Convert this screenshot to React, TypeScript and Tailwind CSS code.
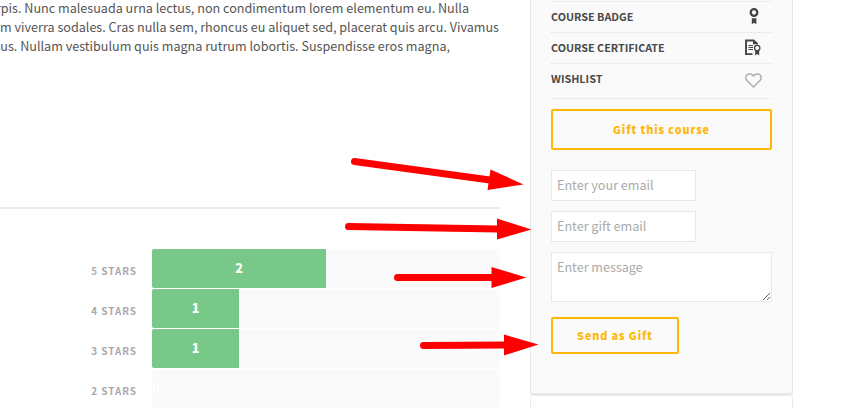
import React from "react";

const paragraph = [
  { text: "rpis. Nunc malesuada urna lectus, non condimentum lorem elementum eu. Nulla", width: "w-[469px]" },
  { text: "am viverra sodales. Cras nulla sem, rhoncus eu aliquet sed, placerat quis arcu. Vivamus", width: "w-[499px]" },
  { text: "sus. Nullam vestibulum quis magna rutrum lobortis. Suspendisse eros magna,", width: "w-[450px]" },
];

const ratings = [
  { stars: 5, count: 2, width: 174 },
  { stars: 4, count: 1, width: 87 },
  { stars: 3, count: 1, width: 87 },
  { stars: 2, count: 0, width: 0 },
];

function BadgeIcon() {
  return (
    <svg className="mb-0.5 mr-px" width="14" height="18" viewBox="0 0 14 18">
      <circle cx="7" cy="5.500" r="3.300" fill="none" stroke="#444" strokeWidth="2.300" />
      <path d="M4.800 11.300h4.600v6L7.100 15.700 4.800 17.300z" fill="#444" />
    </svg>
  );
}

function CertificateIcon() {
  return (
    <svg className="mb-0.5 mr-px" width="17" height="17" viewBox="0 0 17 17" fill="none">
      <path d="M8.500 15.100H2V1.500H9.500L13.500 5" stroke="#444" strokeWidth="1.900" />
      <path d="M9 .6v4.600h5z" fill="#444" />
      <path d="M4.500 6.500H9M4.500 8.500H9M4.500 10.500H9" stroke="#444" strokeWidth="1" />
      <circle cx="13.200" cy="9" r="2.700" fill="#fafafa" stroke="#444" strokeWidth="1.300" />
      <path d="M11.200 11.500h4V16.500l-2-1.600-2 1.600z" fill="#444" />
    </svg>
  );
}

function HeartIcon() {
  return (
    <svg className="mt-0.5" width="17" height="15" viewBox="0 0 17 15" fill="none" stroke="#aaa" strokeWidth="1.4" strokeLinejoin="round">
      <path d="M8.5 13.9L2 7.5C-.2 5 .9 1 4.5.9c1.900 0 3.100.8 4 2.100.9-1.300 2.100-2.100 4-2.100 3.600.1 4.700 4.100 2.500 6.600z" />
    </svg>
  );
}

function Arrows() {
  return (
    <svg className="pointer-events-none absolute left-0 top-0" width="846" height="409" stroke="#f00" strokeWidth="7" strokeLinecap="round" fill="#f00">
      <path d="M354.500 161.500L490 180" />
      <path d="M490.500 169.500L523.500 184.500L487.500 190z" stroke="none" />
      <path d="M348.500 226.500L498 229" />
      <path d="M497 218.500L531.500 229.500L497 239.500z" stroke="none" />
      <path d="M397.500 277.500H494" />
      <path d="M491.500 267L526.500 277.500L491.500 288z" stroke="none" />
      <path d="M423.500 345.500L505 345" />
      <path d="M504 334.500L538.500 344.500L504 355.500z" stroke="none" />
    </svg>
  );
}

export default function App() {
  return (
    <div className="relative flex h-[409px] w-[846px] overflow-hidden bg-white font-['Noto_Sans_CJK_SC',sans-serif]">
      <main className="w-[500px] shrink-0 overflow-hidden">
        <div className="-mt-0.5 h-[209px] text-[12.6px] leading-[19px] text-[#555]">
          {paragraph.map((line) => (
            <div key={line.text} className={`flex justify-end whitespace-nowrap ${line.width}`}>{line.text}</div>
          ))}
        </div>
        <div className="h-0.5 bg-[#ebebeb]" />
        <div className="mt-10 flex flex-col gap-px">
          {ratings.map((r) => (
            <div key={r.stars} className="flex h-[39px]">
              <div className="w-[152px] pr-[15px] pt-1 text-right text-[9.9px] font-bold leading-[37px] tracking-[1px] text-[#aaa]">{r.stars} STARS</div>
              <div className="flex-1 rounded-sm bg-[#fafafa]">
                <div className="h-[39px] rounded-l-[2px] bg-[#78c989] text-center text-[12.6px] font-black leading-[38px] text-white" style={{ width: r.width }}>{r.count}</div>
              </div>
            </div>
          ))}
        </div>
      </main>
      <aside className="ml-[30px] w-[263px] shrink-0">
        <div className="h-[395px] rounded-b-[3px] border border-b-2 border-t-0 border-[#e6e6e6] bg-[#fafafa] px-5 pt-px text-[10.8px] font-bold text-[#4a4a4a]">
          <div className="flex h-8 items-center justify-between border-y border-dotted border-[#ddd] pr-[10px]"><span className="pb-0.5">COURSE BADGE</span><BadgeIcon /></div>
          <div className="flex h-[31px] items-center justify-between border-b border-dotted border-[#ddd] pr-[10px]"><span className="pb-0.5">COURSE CERTIFICATE</span><CertificateIcon /></div>
          <div className="flex h-[35px] items-center justify-between border-b border-dotted border-[#ddd] pb-1 pr-[10px]"><span className="pb-0.5">WISHLIST</span><HeartIcon /></div>
          <button className="mt-[10px] block h-[41px] w-[221px] rounded-[2px] border-2 border-[#ffb606] text-[10.8px] font-black tracking-[0.9px] text-[#ffb606]">Gift this course</button>
          <input className="mt-5 block h-[31px] w-[145px] border border-[#e8e8e8] bg-white px-[5px] pb-0.5 text-[12.6px] font-normal placeholder:text-[#aaa]" placeholder="Enter your email" />
          <input className="mt-[10px] block h-[31px] w-[145px] border border-[#e8e8e8] bg-white px-[5px] pb-0.5 text-[12.6px] font-normal placeholder:text-[#aaa]" placeholder="Enter gift email" />
          <textarea className="mt-[10px] block h-[50px] w-[221px] border border-[#e8e8e8] bg-white px-[5px] py-1 text-[12.6px] font-normal leading-[19px] placeholder:text-[#aaa]" placeholder="Enter message" />
          <button className="mt-[15px] block h-[37px] w-[128px] rounded-[2px] border-2 border-[#ffb606] text-[10.8px] font-black tracking-[0.9px] text-[#ffb606]">Send as Gift</button>
        </div>
        <div className="h-5 rounded-t-[3px] border border-b-0 border-[#ebebeb] bg-white" />
      </aside>
      <Arrows />
    </div>
  );
}
